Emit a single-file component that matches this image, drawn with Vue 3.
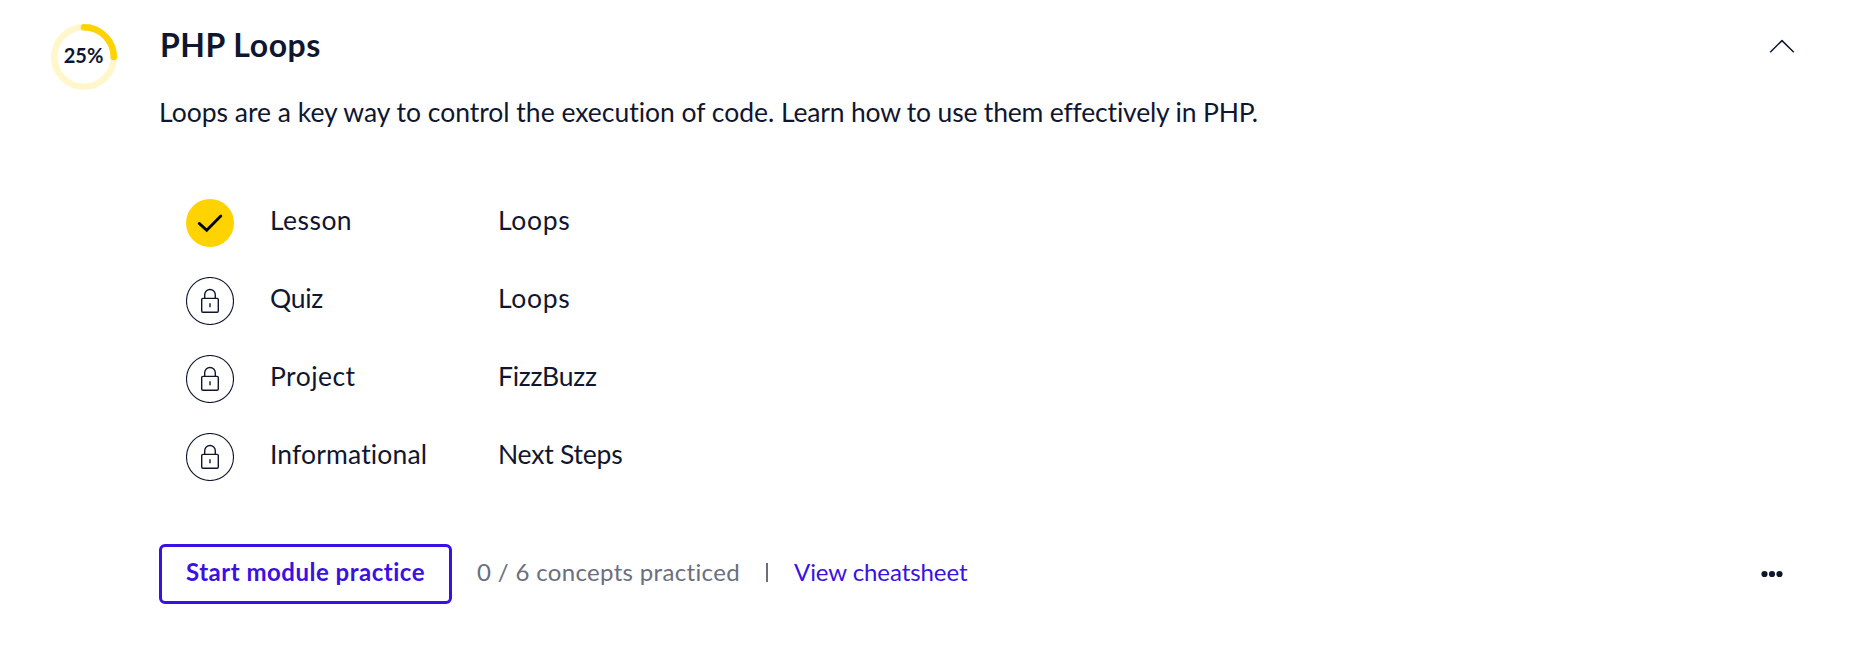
<script setup>
const percent = 25
const radius = 29.75
const circumference = 2 * Math.PI * radius
const items = [
  { type: 'Lesson', title: 'Loops', done: true },
  { type: 'Quiz', title: 'Loops', done: false },
  { type: 'Project', title: 'FizzBuzz', done: false },
  { type: 'Informational', title: 'Next Steps', done: false },
]
const slug = (text) => text.toLowerCase().replace(' ', '-')
</script>

<template>
  <section class="module">
    <div class="progress">
      <svg class="ring" viewBox="0 0 66 66" fill="none" stroke-width="6.5">
        <circle class="track" cx="33" cy="33" :r="radius" />
        <circle
          class="value"
          cx="33"
          cy="33"
          :r="radius"
          stroke-linecap="round"
          :stroke-dasharray="`${(circumference * percent) / 100} ${circumference}`"
          transform="rotate(-90 33 33)"
        />
      </svg>
      <span class="percent">{{ percent }}%</span>
    </div>

    <div class="content">
      <header class="head">
        <h2>PHP Loops</h2>
        <button class="icon-button" aria-label="Collapse">
          <svg width="26" height="16" viewBox="0 0 26 16" fill="none" stroke="#10162f" stroke-width="1.5">
            <path d="M1.2 13.2 13 1.6 24.8 13.2" stroke-linejoin="round" />
          </svg>
        </button>
      </header>
      <p class="description"><span class="sentence">Loops are a key way to control the execution of code.</span> <span>Learn how to use them effectively in PHP.</span></p>

      <ul class="items">
        <li v-for="item in items" :key="item.type">
          <svg v-if="item.done" class="status" viewBox="0 0 48 48" fill="none">
            <circle cx="24" cy="24" r="24" fill="#ffd300" />
            <path d="M13.2 24.4 20.7 31.2 34.8 17" stroke="#000" stroke-width="2.8" stroke-linecap="round" />
          </svg>
          <svg v-else class="status" viewBox="0 0 48 48" fill="none" stroke="#10162f">
            <circle cx="24" cy="24" r="23.5" stroke-width="1.1" />
            <rect x="15.7" y="21.4" width="16.6" height="13.9" rx="1.2" stroke-width="1.4" />
            <path d="M18.7 21.5V17.8a5.3 5.3 0 0 1 10.6 0v3.7M24 26.3v4" stroke-width="1.4" />
          </svg>
          <span :class="slug(item.type)">{{ item.type }}</span>
          <span :class="slug(item.title)">{{ item.title }}</span>
        </li>
      </ul>

      <footer class="actions">
        <button class="practice">Start module practice</button>
        <span class="count">0 / 6 concepts practiced</span>
        <span class="divider"></span>
        <a class="cheatsheet">View cheatsheet</a>
        <button class="icon-button more" aria-label="More options">
          <svg width="22" height="8" viewBox="0 0 22 8" fill="#10162f">
            <circle cx="3.5" cy="4" r="3.1" />
            <circle cx="11" cy="4" r="3.1" />
            <circle cx="18.5" cy="4" r="3.1" />
          </svg>
        </button>
      </footer>
    </div>
  </section>
</template>

<style>
body {
  background: #fff;
}
</style>

<style scoped>
.module {
  box-sizing: border-box;
  height: 652px;
  padding: 24px 69px 0 51px;
  display: flex;
  gap: 42px;
  color: #10162f;
  font-family: Lato, "Liberation Sans", sans-serif;
  font-size: 26.5px;
  background: #fff;
}
.progress {
  display: grid;
  flex: none;
  width: 66px;
  height: 66px;
  place-items: center;
}
.progress > * {
  grid-area: 1 / 1;
}
.ring {
  width: 66px;
  height: 66px;
}
.track {
  stroke: #fff6cc;
}
.value {
  stroke: #ffd300;
}
.percent {
  font-size: 20px;
  font-weight: 700;
  line-height: 24px;
  padding: 0 1px 4px 0;
}
.content {
  flex: 1;
  min-width: 0;
}
.head {
  display: flex;
  justify-content: space-between;
  height: 40px;
}
h2 {
  margin: 0 0 0 1px;
  font-size: 32px;
  font-weight: 700;
  line-height: 41px;
  letter-spacing: 0.55px;
}
.icon-button {
  border: 0;
  padding: 0;
  background: none;
  display: flex;
}
.head .icon-button {
  padding-top: 15px;
}
.description {
  margin: 28px 0 0;
  line-height: 40px;
  letter-spacing: -0.18px;
  white-space: nowrap;
}
.sentence {
  letter-spacing: -0.01px;
}
.items {
  list-style: none;
  margin: 67px 0 0;
  padding: 0 0 0 27px;
  display: grid;
  gap: 30px;
}
.items li {
  display: grid;
  grid-template-columns: 48px 192px 1fr;
  column-gap: 36px;
  height: 48px;
  line-height: 42px;
}
.lesson,
.project {
  letter-spacing: 0.45px;
}
.quiz {
  letter-spacing: -0.3px;
}
.informational {
  letter-spacing: 0.15px;
}
.loops {
  letter-spacing: 0.7px;
}
.fizzbuzz,
.next-steps {
  letter-spacing: -0.22px;
}
.status {
  width: 48px;
  height: 48px;
}
.actions {
  display: flex;
  align-items: center;
  height: 60px;
  margin-top: 63px;
  font-size: 24px;
  white-space: nowrap;
}
.practice {
  box-sizing: border-box;
  width: 293px;
  height: 60px;
  border: 3px solid #3a10e5;
  border-radius: 6px;
  padding: 0 0 4px;
  background: #fff;
  color: #3a10e5;
  font: 700 24px/30px Lato, "Liberation Sans", sans-serif;
  letter-spacing: 0.5px;
}
.count {
  width: 263px;
  margin-left: 25px;
  padding-bottom: 5px;
  color: #6a6e7e;
  letter-spacing: 0.34px;
}
.divider {
  width: 2px;
  height: 19px;
  margin: 0 26px 3px;
  background: #6a6e7e;
}
.cheatsheet {
  padding-bottom: 5px;
  color: #3a10e5;
  letter-spacing: -0.08px;
}
.more {
  margin: 0 12px 1px auto;
}
</style>
